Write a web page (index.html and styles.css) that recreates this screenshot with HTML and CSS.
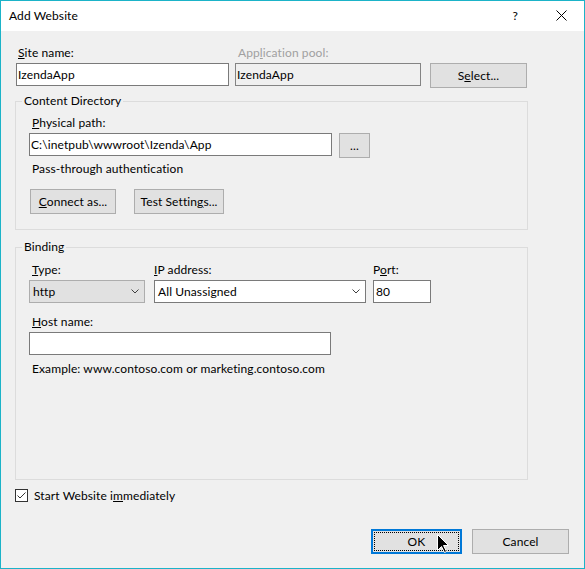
FILE: index.html
```html
<!DOCTYPE html>
<html lang="en">
<head>
    <meta charset="UTF-8">
    <title>Add Website</title>
    <link rel="stylesheet" href="styles.css">
</head>
<body>

    <div class="window">
        <div class="titlebar">
            <span class="title">Add Website</span>
            <span class="help">?</span>
            <svg class="close" width="11" height="11" viewBox="0 0 11 11">
                <path d="M0.5 0.5 L10.5 10.5 M10.5 0.5 L0.5 10.5" stroke="#000" stroke-width="1" fill="none"/>
            </svg>
        </div>

        <div class="content">
            <!-- Site name / app pool -->
            <div class="site-row">
                <div class="site-name">
                    <label class="field-label"><u>S</u>ite name:</label>
                    <div class="input">IzendaApp</div>
                </div>
                <div class="app-pool">
                    <label class="field-label disabled">App<u>l</u>ication pool:</label>
                    <div class="input input-disabled">IzendaApp</div>
                </div>
                <button class="btn btn-select">S<u>e</u>lect...</button>
            </div>

            <!-- Content Directory -->
            <fieldset class="group content-dir">
                <legend>Content Directory</legend>
                <label class="field-label"><u>P</u>hysical path:</label>
                <div class="path-row">
                    <div class="input path-input">C:\inetpub\wwwroot\Izenda\App</div>
                    <button class="btn btn-browse">...</button>
                </div>
                <div class="note">Pass-through authentication</div>
                <div class="btn-row">
                    <button class="btn btn-connect"><u>C</u>onnect as...</button>
                    <button class="btn btn-test">Test Settin<u>g</u>s...</button>
                </div>
            </fieldset>

            <!-- Binding -->
            <fieldset class="group binding">
                <legend>Binding</legend>
                <div class="binding-row">
                    <div class="type-field">
                        <label class="field-label"><u>T</u>ype:</label>
                        <div class="select select-type">
                            <span>http</span>
                            <svg class="chevron" width="8" height="5" viewBox="0 0 8 5">
                                <path d="M0.5 0.5 L4 4 L7.5 0.5" stroke="#404040" fill="none"/>
                            </svg>
                        </div>
                    </div>
                    <div class="ip-field">
                        <label class="field-label no-pad"><u>I</u>P address:</label>
                        <div class="select select-ip">
                            <span>All Unassigned</span>
                            <svg class="chevron" width="8" height="5" viewBox="0 0 8 5">
                                <path d="M0.5 0.5 L4 4 L7.5 0.5" stroke="#404040" fill="none"/>
                            </svg>
                        </div>
                    </div>
                    <div class="port-field">
                        <label class="field-label no-pad">P<u>o</u>rt:</label>
                        <div class="input port-input">80</div>
                    </div>
                </div>
                <label class="field-label host-label"><u>H</u>ost name:</label>
                <div class="input host-input"></div>
                <div class="note example">Example: www.contoso.com or marketing.contoso.com</div>
            </fieldset>

            <div class="check-row">
                <span class="checkbox">
                    <svg width="11" height="11" viewBox="0 0 11 11">
                        <path d="M1.5 5.5 L4 8 L9.5 2.5" stroke="#333" fill="none"/>
                    </svg>
                </span>
                <span>Start Website i<u>m</u>mediately</span>
            </div>

            <div class="dialog-buttons">
                <button class="btn btn-ok">OK</button>
                <button class="btn btn-cancel">Cancel</button>
            </div>
        </div>

        <!-- mouse pointer -->
        <svg class="pointer" width="13" height="20" viewBox="0 0 13 20">
            <path d="M0.5 0.5 L0.5 16.5 L4.5 12.5 L7.5 18.5 L9.5 17.5 L6.5 11.5 L11.5 11.5 Z" fill="#000" stroke="#fff" stroke-width="1"/>
        </svg>
    </div>

</body>
</html>
```

FILE: styles.css
```css
* {
    box-sizing: border-box;
}

body {
    margin: 0;
    font-family: Lato, 'Noto Sans', sans-serif;
    font-size: 12px;
    letter-spacing: 0.1px;
    color: #000;
}

.window {
    position: relative;
    width: 585px;
    height: 569px;
    border: 1px solid #1bb3c8;
    background: #f0f0f0;
    display: flex;
    flex-direction: column;
}

/* Title bar */
.titlebar {
    height: 30px;
    background: #fff;
    display: flex;
    align-items: center;
    padding: 0 17px 2px 8px;
}

.title {
    flex: 1;
}

.help {
    margin-right: 38px;
}

.close {
    display: block;
}

/* Main area */
.content {
    flex: 1;
    display: flex;
    flex-direction: column;
    padding: 14px 15px 14px 14px;
}

.field-label {
    display: block;
    line-height: 16px;
    height: 16px;
    padding-left: 3px;
    margin-bottom: 2px;
    white-space: nowrap;
}

.field-label.no-pad {
    padding-left: 0;
}

.disabled {
    color: #a0a0a0;
}

.input {
    height: 23px;
    border: 1px solid #7a7a7a;
    background: #fff;
    padding: 0 1px;
    line-height: 21px;
    white-space: nowrap;
}

.input-disabled {
    background: #f0f0f0;
    border-color: #848484;
}

.btn {
    height: 25px;
    border: 1px solid #adadad;
    background: #e1e1e1;
    font-family: inherit;
    font-size: 12px;
    letter-spacing: inherit;
    color: #000;
    padding: 0;
    margin: 0;
}

/* Site row */
.site-row {
    display: flex;
    align-items: flex-start;
}

.site-name {
    margin-left: 1px;
    width: 213px;
}

.site-name .field-label {
    padding-left: 2px;
}

.app-pool {
    margin-left: 6px;
    width: 186px;
}

.btn-select {
    margin-left: 9px;
    margin-top: 18px;
    width: 97px;
}

/* Group boxes */
.group {
    width: 513px;
    min-width: 0;
    margin: 5px 0 0 0;
    border: 1px solid #dcdcdc;
    padding: 6px 0 15px 13px;
}

.group legend {
    margin-left: -7px;
    padding: 0 2px;
    line-height: 16px;
}

.path-row {
    display: flex;
    align-items: flex-start;
}

.path-input {
    width: 303px;
}

.btn-browse {
    margin-left: 7px;
    width: 31px;
}

.note {
    margin-top: 3px;
    padding-left: 3px;
    line-height: 16px;
    white-space: nowrap;
}

.btn-row {
    display: flex;
    margin-top: 12px;
}

.btn-connect {
    margin-left: 1px;
    width: 86px;
}

.btn-test {
    margin-left: 18px;
    width: 90px;
}

/* Binding */
.binding {
    flex: 1;
    margin-top: 9px;
    padding-top: 7px;
}

.binding-row {
    display: flex;
    align-items: flex-start;
}

.type-field {
    width: 116px;
}

.ip-field {
    margin-left: 9px;
    width: 212px;
}

.port-field {
    margin-left: 7px;
    width: 58px;
}

.select {
    height: 23px;
    border: 1px solid #7a7a7a;
    background: #fff;
    display: flex;
    align-items: center;
    justify-content: space-between;
    padding: 0 5px 0 3px;
}

.select-type {
    background: #e1e1e1;
    border-color: #adadad;
}

.chevron {
    display: block;
}

.port-input {
    padding-left: 2px;
}

.host-label {
    margin-top: 11px;
}

.host-input {
    width: 302px;
}

.example {
    margin-top: 6px;
}

/* Bottom */
.check-row {
    display: flex;
    align-items: center;
    height: 16px;
    margin-top: 7px;
}

.checkbox {
    width: 13px;
    height: 13px;
    border: 1px solid #333;
    background: #fff;
    margin-right: 6px;
}

.checkbox svg {
    display: block;
}

.dialog-buttons {
    display: flex;
    justify-content: flex-end;
    margin-top: 26px;
}

.btn-ok {
    position: relative;
    width: 91px;
    border: 2px solid #0078d7;
}

.btn-ok::after {
    content: '';
    position: absolute;
    top: 1px;
    left: 1px;
    right: 1px;
    bottom: 1px;
    border: 1px dotted #000;
}

.btn-cancel {
    margin-left: 10px;
    width: 97px;
}

.pointer {
    position: absolute;
    left: 436px;
    top: 533px;
}
```
